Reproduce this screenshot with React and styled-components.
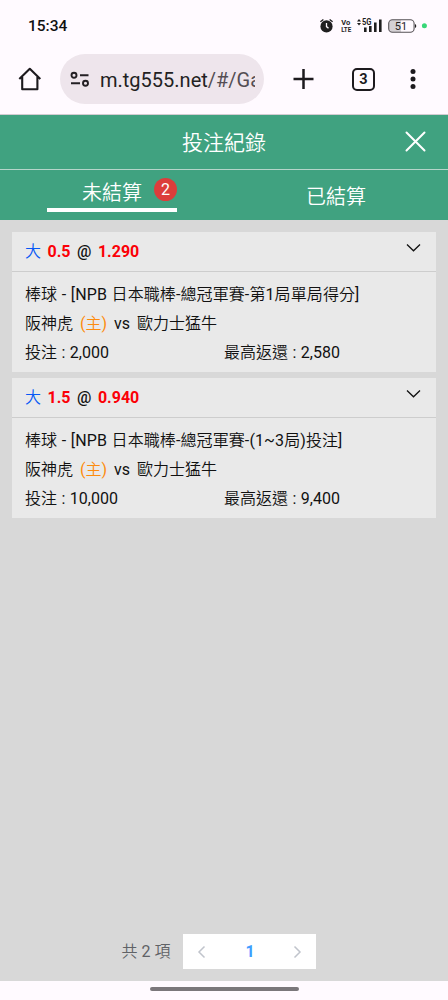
import React from 'react'
import styled, { createGlobalStyle } from 'styled-components'

const GlobalStyle = createGlobalStyle`
  * {
    box-sizing: border-box;
  }
  body {
    margin: 0;
    background-color: #d8d8d8;
    font-family: Roboto, "Noto Sans CJK TC DemiLight", "Noto Sans CJK TC", sans-serif;
    color: #111;
  }
`

const Phone = styled.div`
  display: flex;
  flex-direction: column;
  width: 448px;
  height: 1000px;
  overflow: hidden;
`

const StatusBar = styled.div`
  display: flex;
  align-items: center;
  justify-content: space-between;
  height: 52px;
  padding: 0 21px 0 28px;
  background-color: #fffaff;
`

const Clock = styled.span`
  font-size: 15.5px;
  font-weight: 500;
  color: #111;
`

const Toolbar = styled.div`
  display: flex;
  align-items: center;
  height: 63px;
  padding: 0 20px 8px 18px;
  background-color: #fffaff;
  border-bottom: 1px solid #d3ccd2;
`

const AddressBar = styled.div`
  display: flex;
  align-items: center;
  width: 204px;
  height: 50px;
  margin: 0 28px 0 18px;
  padding-left: 10px;
  border-radius: 25px;
  background-color: #eee5ec;
`

const Url = styled.div`
  width: 155px;
  margin-left: 10px;
  padding-top: 1px;
  overflow: hidden;
  white-space: nowrap;
  font-size: 20px;
  line-height: 28px;
  color: #231f23;

  span {
    color: #544e54;
  }
`

const TabCount = styled.div`
  display: flex;
  align-items: center;
  justify-content: center;
  width: 23px;
  height: 23px;
  margin: 0 35px 0 38px;
  border: 2px solid #1d1a1e;
  border-radius: 5px;
  font-size: 14.5px;
  font-weight: 700;
  color: #1d1a1e;
`

const TitleBar = styled.header`
  display: grid;
  grid-template-columns: 60px 1fr 60px;
  align-items: center;
  height: 55px;
  background-color: #40a280;
  border-bottom: 1px solid #b5d5ca;
  color: #fff;
`

const Title = styled.h1`
  grid-column: 2;
  margin: 0;
  padding-top: 1px;
  text-align: center;
  font-size: 21px;
  font-weight: 350;
  line-height: 30px;
`

const CloseButton = styled.button`
  display: flex;
  justify-content: flex-end;
  padding: 0 22px 2px 0;
  border: none;
  background: none;
  color: #fff;
`

const Tabs = styled.nav`
  display: grid;
  grid-template-columns: 1fr 1fr;
  justify-items: center;
  height: 50px;
  background-color: #40a280;
`

const Tab = styled.div`
  position: relative;
  width: 130px;
  height: ${({ $active }) => ($active ? '42px' : '50px')};
  border-bottom: ${({ $active }) => ($active ? '4px solid #fff' : 'none')};
  text-align: center;
  font-size: 20px;
  font-weight: 350;
  line-height: ${({ $active }) => ($active ? '46px' : '54px')};
  color: #fff;
`

const Badge = styled.span`
  position: absolute;
  top: 8px;
  right: 0;
  width: 23px;
  height: 23px;
  border-radius: 50%;
  background-color: #dc3d3b;
  font-size: 16px;
  font-weight: 400;
  line-height: 23px;
`

const BetList = styled.main`
  display: flex;
  flex: 1;
  flex-direction: column;
  gap: 6px;
  padding: 12px 12px 0;
  background-color: #d8d8d8;
`

const Card = styled.article`
  height: 140px;
  background-color: #e9e9e9;
`

const CardHeader = styled.div`
  display: flex;
  justify-content: space-between;
  height: 40px;
  padding: 0 15px 0 13px;
  border-bottom: 1px solid #cdcdcd;
  font-size: 16px;
  line-height: 40px;
`

const Odds = styled.div`
  display: flex;
  gap: 6.5px;
  font-weight: 500;

  em {
    font-style: normal;
    font-weight: 400;
    color: #0758f5;
  }
  b {
    font-weight: 700;
    color: #fb0007;
  }
`

const CardBody = styled.div`
  padding: 8px 13px 0;
  font-size: 16px;
  line-height: 29px;
  white-space: nowrap;
  word-spacing: 0.5px;
`

const EventName = styled.div`
  letter-spacing: 0.1px;
`

const Teams = styled.div`
  display: flex;
  gap: 7px;
`

const Home = styled.span`
  color: #fd8b0d;
`

const Amounts = styled.div`
  display: grid;
  grid-template-columns: 199px 1fr;
`

const Pagination = styled.footer`
  display: flex;
  align-items: center;
  justify-content: center;
  height: 47px;
  padding: 0 10px 12px 0;
  background-color: #d8d8d8;
`

const Total = styled.span`
  margin-right: 13px;
  padding-bottom: 3px;
  font-size: 16px;
  color: #606266;
`

const Pager = styled.div`
  display: flex;
  align-items: center;
  justify-content: space-between;
  width: 133px;
  height: 35px;
  padding: 0 14px;
  background-color: #fff;
  color: #c0c4cc;

  b {
    font-size: 16px;
    color: #409eff;
  }
`

const GestureBar = styled.div`
  display: flex;
  justify-content: center;
  height: 19px;
  padding-top: 6px;
  background-color: #fffaff;

  &::after {
    content: '';
    width: 149px;
    height: 4px;
    border-radius: 2px;
    background-color: #7b777b;
  }
`

const StatusIcons = () => (
  <svg width="108" height="20" viewBox="319 16 108 20" fill="#1f1f1f" fontFamily="Roboto, sans-serif">
    <circle cx="326.5" cy="26.4" r="6.1" />
    <path d="M320.4 21.8l3-2.4M332.6 21.8l-3-2.4" stroke="#1f1f1f" strokeWidth="1.3" />
    <path d="M326.5 23v3.6l2 1.7" stroke="#fffaff" strokeWidth="1.3" fill="none" />
    <text x="341.2" y="24.8" fontSize="8" fontWeight="700" textLength="9" lengthAdjust="spacingAndGlyphs">Vo</text>
    <text x="341.2" y="32.2" fontSize="8" fontWeight="700" textLength="10" lengthAdjust="spacingAndGlyphs">LTE</text>
    <path d="M357 21.4l2-2.4 2 2.4zM357 23l2 2.4 2-2.4z" />
    <text x="362" y="25" fontSize="9" fontWeight="700" textLength="9.5" lengthAdjust="spacingAndGlyphs">5G</text>
    <path d="M364 27.5h2.6V32H364zM369 26h2.6v6H369zM374 22.6h2.6V32H374zM379 19.6h2.6V32H379z" />
    <path d="M392 20h9v12h-9a3.5 3.5 0 0 1-3-3.5v-5a3.5 3.5 0 0 1 3-3.5z" fill="#d5d1d5" />
    <rect x="388.7" y="19.7" width="25.4" height="12.6" rx="3.8" fill="none" stroke="#555155" strokeWidth="1.1" />
    <path d="M415 24v4a2.2 2.2 0 0 0 0-4z" />
    <text x="401" y="30" fontSize="11" textAnchor="middle">51</text>
    <circle cx="424.4" cy="25.8" r="2.5" fill="#38d778" />
  </svg>
)

const HomeIcon = () => (
  <svg width="24" height="24" viewBox="0 0 24 24" fill="none" stroke="#1d1a1e" strokeWidth="2.1" strokeLinejoin="round">
    <path d="M1.3 12L11.8 1.8 22.3 12M4.2 10v12.2h15.2V10" />
  </svg>
)

const SiteIcon = () => (
  <svg width="20" height="16" viewBox="0 0 20 16" fill="none" stroke="#231f23" strokeWidth="1.9">
    <circle cx="4" cy="4.2" r="2.5" />
    <path d="M10 4.2h8.5M1 12.2h9" />
    <circle cx="15.5" cy="12.2" r="2.5" />
  </svg>
)

const Chevron = ({ d, width, height, ...rest }) => (
  <svg width={width} height={height} viewBox={`0 0 ${width} ${height}`} fill="none" stroke="currentColor" {...rest}>
    <path d={d} />
  </svg>
)

const bets = [
  { line: '0.5', odds: '1.290', event: '棒球 - [NPB 日本職棒-總冠軍賽-第1局單局得分]', stake: '2,000', payout: '2,580' },
  { line: '1.5', odds: '0.940', event: '棒球 - [NPB 日本職棒-總冠軍賽-(1~3局)投注]', stake: '10,000', payout: '9,400' },
]

function BetCard({ bet }) {
  return (
    <Card>
      <CardHeader>
        <Odds>
          <em>大</em>
          <b>{bet.line}</b>
          <span>@</span>
          <b>{bet.odds}</b>
        </Odds>
        <Chevron width={15} height={32} d="M1 12.5l6.5 6.3 6.5-6.3" strokeWidth="1.3" />
      </CardHeader>
      <CardBody>
        <EventName>{bet.event}</EventName>
        <Teams>
          <span>阪神虎</span>
          <Home>(主)</Home>
          <span>vs</span>
          <span>歐力士猛牛</span>
        </Teams>
        <Amounts>
          <span>投注 : {bet.stake}</span>
          <span>最高返還 : {bet.payout}</span>
        </Amounts>
      </CardBody>
    </Card>
  )
}

export default function App() {
  return (
    <Phone>
      <GlobalStyle />
      <StatusBar>
        <Clock>15:34</Clock>
        <StatusIcons />
      </StatusBar>
      <Toolbar>
        <HomeIcon />
        <AddressBar>
          <SiteIcon />
          <Url>m.tg555.net<span>/#/Ga</span></Url>
        </AddressBar>
        <svg width="22" height="22" viewBox="0 0 22 22" stroke="#1d1a1e" strokeWidth="2.5">
          <path d="M11.5 1v20M1.5 11h20" />
        </svg>
        <TabCount>3</TabCount>
        <svg width="6" height="22" viewBox="0 0 6 22" fill="#1d1a1e">
          <circle cx="3" cy="3.4" r="2.5" />
          <circle cx="3" cy="11" r="2.5" />
          <circle cx="3" cy="18.6" r="2.5" />
        </svg>
      </Toolbar>
      <TitleBar>
        <Title>投注紀錄</Title>
        <CloseButton>
          <svg width="21" height="21" viewBox="0 0 21 21" stroke="currentColor" strokeWidth="2" strokeLinecap="round">
            <path d="M1.5 1.5l18 18M19.5 1.5l-18 18" />
          </svg>
        </CloseButton>
      </TitleBar>
      <Tabs>
        <Tab $active>
          未結算
          <Badge>2</Badge>
        </Tab>
        <Tab>已結算</Tab>
      </Tabs>
      <BetList>
        {bets.map((bet) => (
          <BetCard key={bet.line} bet={bet} />
        ))}
      </BetList>
      <Pagination>
        <Total>共 2 項</Total>
        <Pager>
          <Chevron width={9} height={14} d="M7.5 1.5L2 7l5.5 5.5" strokeWidth="1.5" />
          <b>1</b>
          <Chevron width={9} height={14} d="M1.5 1.5L7 7l-5.5 5.5" strokeWidth="1.5" />
        </Pager>
      </Pagination>
      <GestureBar />
    </Phone>
  )
}
